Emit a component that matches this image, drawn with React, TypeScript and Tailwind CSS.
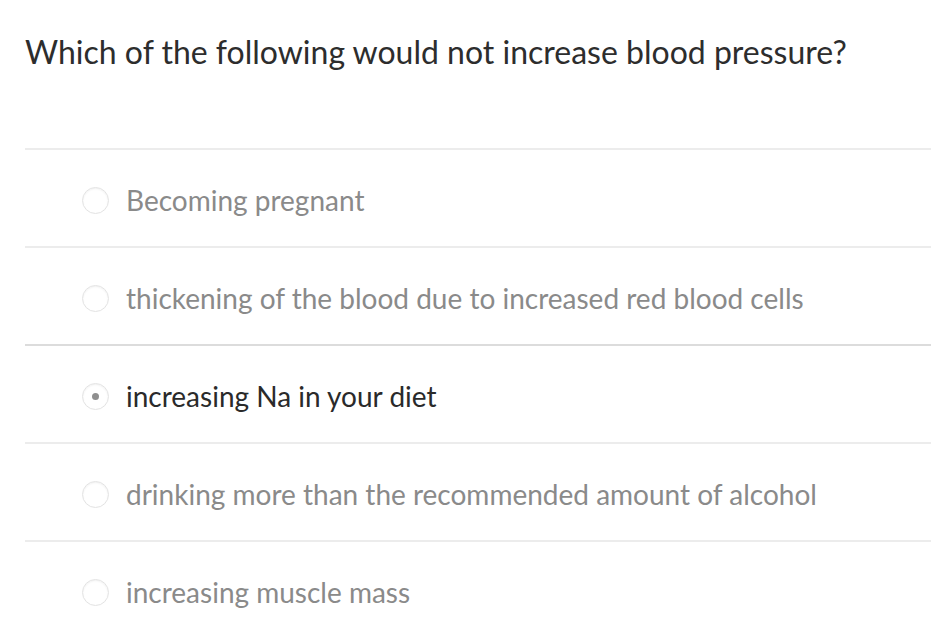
import React, { useState } from 'react';

const answers = [
  'Becoming pregnant',
  'thickening of the blood due to increased red blood cells',
  'increasing Na in your diet',
  'drinking more than the recommended amount of alcohol',
  'increasing muscle mass',
];

const App: React.FC = () => {
  const [selected, setSelected] = useState(2);

  return (
    <div className="min-h-screen bg-white font-['Lato','Noto_Sans',sans-serif] px-[25px] pt-[30px]">
      <h1 className="text-[32px] leading-[44px] text-[#2d2d2d]">
        Which of the following would not increase blood pressure?
      </h1>

      <div className="mt-[74px] w-[906px]">
        {answers.map((answer, i) => (
          <div
            key={answer}
            onClick={() => setSelected(i)}
            className={`h-[98px] border-t-2 flex items-center pl-[57px] pt-[4px] cursor-pointer ${
              i === 2 ? 'border-[#dcdcdc]' : 'border-[#ececec]'
            }`}
          >
            <span className="w-[27px] h-[27px] rounded-full border border-[#e3e3e3] shadow-[inset_0_1px_2px_rgba(0,0,0,0.06)] flex items-center justify-center shrink-0">
              {selected === i && (
                <span className="w-[7px] h-[7px] rounded-full bg-[#8f8f8f]" />
              )}
            </span>
            <span
              className={`ml-[17px] text-[28px] leading-[36px] ${
                selected === i ? 'text-[#2a2a2a]' : 'text-[#8a8a8a]'
              }`}
            >
              {answer}
            </span>
          </div>
        ))}
      </div>
    </div>
  );
};

export default App;
